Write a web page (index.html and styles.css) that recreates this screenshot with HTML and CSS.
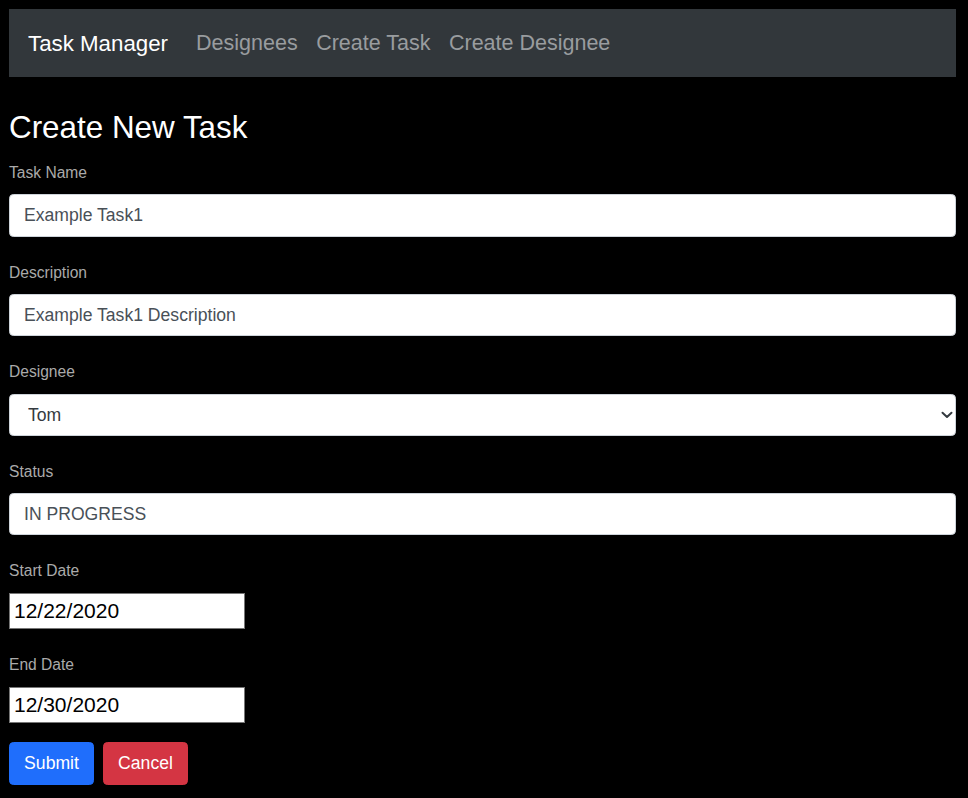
FILE: index.html
```html
<!DOCTYPE html>
<html lang="en">
<head>
<meta charset="utf-8">
<title>Task Manager</title>
<link rel="stylesheet" href="styles.css">
</head>
<body>
<nav class="navbar">
  <a class="brand" href="#">Task Manager</a>
  <div class="nav-links">
    <a class="nav-link" href="#">Designees</a>
    <a class="nav-link" href="#">Create Task</a>
    <a class="nav-link" href="#">Create Designee</a>
  </div>
</nav>
<main class="content">
  <h2 class="title">Create New Task</h2>
  <form class="form">
    <div class="group">
      <label class="label">Task Name</label>
      <input class="control" type="text" value="Example Task1">
    </div>
    <div class="group">
      <label class="label">Description</label>
      <input class="control" type="text" value="Example Task1 Description">
    </div>
    <div class="group">
      <label class="label">Designee</label>
      <div class="select-wrap">
        <select class="control select">
          <option>Tom</option>
        </select>
        <svg class="chevron" width="12" height="8" viewBox="0 0 12 8"><path d="M1.5 1.8 L6 6 L10.5 1.8" fill="none" stroke="#343a40" stroke-width="2" stroke-linecap="round" stroke-linejoin="round"/></svg>
      </div>
    </div>
    <div class="group">
      <label class="label">Status</label>
      <input class="control" type="text" value="IN PROGRESS">
    </div>
    <div class="group">
      <label class="label">Start Date</label>
      <input class="date" type="text" value="12/22/2020">
    </div>
    <div class="group last">
      <label class="label">End Date</label>
      <input class="date" type="text" value="12/30/2020">
    </div>
    <div class="actions">
      <button class="btn btn-primary" type="button">Submit</button>
      <button class="btn btn-danger" type="button">Cancel</button>
    </div>
  </form>
</main>
</body>
</html>
```

FILE: styles.css
```css
html, body {
  background: #000;
}
body {
  margin: 9px 12px 9px 9px;
  font-family: "Liberation Sans", Arial, Helvetica, sans-serif;
  color: #fff;
}
.navbar {
  background: #32373b;
  display: flex;
  align-items: center;
  padding: 17px 19px;
  height: 68px;
  box-sizing: border-box;
}
.brand {
  color: #fff;
  text-decoration: none;
  font-size: 22.3px;
  line-height: 33px;
  margin-right: 28px;
}
.nav-links {
  display: flex;
  gap: 18.5px;
}
.nav-link {
  color: #999c9f;
  text-decoration: none;
  font-size: 21.5px;
  line-height: 33px;
}
.content {
  display: block;
}
.title {
  font-size: 31.4px;
  font-weight: 400;
  line-height: 37px;
  margin: 32px 0 15px 0;
  color: #fff;
}
.form {
  display: flex;
  flex-direction: column;
}
.group {
  display: flex;
  flex-direction: column;
  align-items: flex-start;
  margin-bottom: 24px;
}
.group.last {
  margin-bottom: 18.7px;
}
.label {
  font-size: 15.6px;
  line-height: 23px;
  height: 23px;
  color: #aaaaaa;
  margin-bottom: 10.4px;
}
.control {
  box-sizing: border-box;
  width: 100%;
  height: 42.2px;
  padding: 0 14px;
  font-family: inherit;
  font-size: 17.6px;
  color: #495057;
  background: #fff;
  border: 1px solid #ced4da;
  border-radius: 4.4px;
  outline: none;
}
.select-wrap {
  position: relative;
  width: 100%;
  height: 42.2px;
}
.select {
  appearance: none;
  -webkit-appearance: none;
  padding-left: 18px;
  color: #343a40;
}
.chevron {
  position: absolute;
  right: 3px;
  top: 17.5px;
  width: 12px;
  height: 8px;
  pointer-events: none;
}
.date {
  box-sizing: border-box;
  width: 236px;
  height: 36.7px;
  padding: 0 4px;
  font-family: inherit;
  font-size: 21px;
  color: #000;
  background: #fff;
  border: 1px solid #767676;
  border-radius: 0;
  outline: none;
}
.actions {
  display: flex;
  gap: 9px;
}
.btn {
  box-sizing: border-box;
  height: 43px;
  width: 85px;
  padding: 0;
  font-family: inherit;
  font-size: 17.6px;
  color: #fff;
  border: 1px solid transparent;
  border-radius: 4.4px;
  cursor: pointer;
}
.btn-primary {
  background: #1f6efc;
  border-color: #1f6efc;
}
.btn-danger {
  background: #d43543;
  border-color: #d43543;
}
```
